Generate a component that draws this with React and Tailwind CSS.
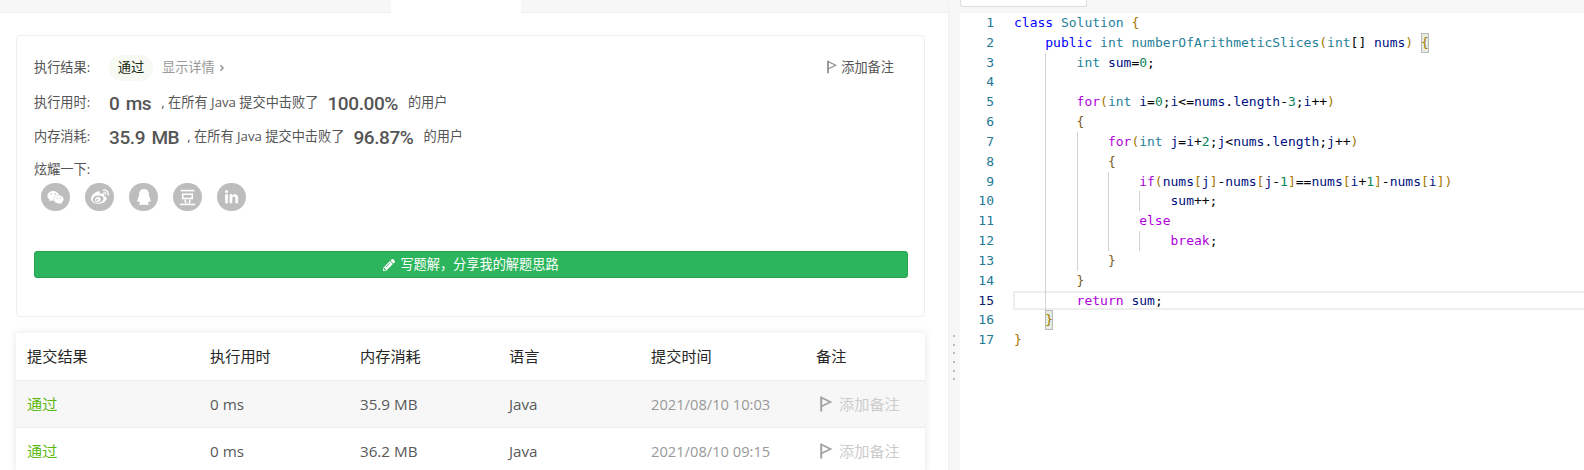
import { FaWeixin, FaWeibo, FaQq, FaLinkedinIn, FaPencilAlt, FaAngleRight } from "react-icons/fa";

const UI_FONT = "font-['Open_Sans','Noto_Sans_CJK_SC',sans-serif]";

const C = {
  kw: "text-[#0000ff]",
  type: "text-[#267f99]",
  ctl: "text-[#af00db]",
  v: "text-[#001080]",
  n: "text-[#098658]",
  b: "text-[#a57800]",
  p: "text-[#000000]",
  m: "text-[#795e26]",
};

const LINES = [
  { indent: 0, guides: [], t: [["class", "kw"], [" "], ["Solution", "type"], [" "], ["{", "b"]] },
  { indent: 1, guides: [], t: [["public", "kw"], [" "], ["int", "type"], [" "], ["numberOfArithmeticSlices", "type"], ["(", "b"], ["int", "type"], ["[] "], ["nums", "v"], [")", "b"], [" "], ["{", "match"]] },
  { indent: 2, guides: [1], t: [["int", "type"], [" "], ["sum", "v"], ["="], ["0", "n"], [";"]] },
  { indent: 2, guides: [1], t: [] },
  { indent: 2, guides: [1], t: [["for", "ctl"], ["(", "b"], ["int", "type"], [" "], ["i", "v"], ["="], ["0", "n"], [";"], ["i", "v"], ["<="], ["nums", "v"], ["."], ["length", "v"], ["-"], ["3", "n"], [";"], ["i", "v"], ["++"], [")", "b"]] },
  { indent: 2, guides: [1], t: [["{", "m"]] },
  { indent: 3, guides: [1, 2], t: [["for", "ctl"], ["(", "b"], ["int", "type"], [" "], ["j", "v"], ["="], ["i", "v"], ["+"], ["2", "n"], [";"], ["j", "v"], ["<"], ["nums", "v"], ["."], ["length", "v"], [";"], ["j", "v"], ["++"], [")", "b"]] },
  { indent: 3, guides: [1, 2], t: [["{", "m"]] },
  { indent: 4, guides: [1, 2, 3], t: [["if", "ctl"], ["(", "b"], ["nums", "v"], ["[", "b"], ["j", "v"], ["]", "b"], ["-"], ["nums", "v"], ["[", "b"], ["j", "v"], ["-"], ["1", "n"], ["]", "b"], ["=="], ["nums", "v"], ["[", "b"], ["i", "v"], ["+"], ["1", "n"], ["]", "b"], ["-"], ["nums", "v"], ["[", "b"], ["i", "v"], ["]", "b"], [")", "b"]] },
  { indent: 5, guides: [1, 2, 3, 4], t: [["sum", "v"], ["++;"]] },
  { indent: 4, guides: [1, 2, 3], t: [["else", "ctl"]] },
  { indent: 5, guides: [1, 2, 3, 4], t: [["break", "ctl"], [";"]] },
  { indent: 3, guides: [1, 2], t: [["}", "m"]] },
  { indent: 2, guides: [1], t: [["}", "m"]] },
  { indent: 2, guides: [1], current: true, t: [["return", "ctl"], [" "], ["sum", "v"], [";"]] },
  { indent: 1, guides: [], t: [["}", "match"]] },
  { indent: 0, guides: [], t: [["}", "b"]] },
];

const RECORDS = [
  { mem: "35.9 MB", time: "2021/08/10 10:03", bg: "bg-[#f7f7f7]" },
  { mem: "36.2 MB", time: "2021/08/10 09:15", bg: "bg-white" },
];

const COLS = "grid grid-cols-[183px_150px_149px_142px_162px_123px] items-center";

function Flag({ className, weight = 1.3 }) {
  return (
    <svg viewBox="0 0 12 16" className={className} fill="none" stroke="currentColor">
      <path d="M1.2 0.5V15.5" strokeWidth="2" />
      <path d="M1.2 1.5L10.5 6L1.2 10.5" strokeWidth={weight} />
    </svg>
  );
}

function Douban() {
  return (
    <svg viewBox="0 0 16 16" className="w-[17px] h-[17px]" fill="none" stroke="white" strokeWidth="1.5">
      <path d="M1.5 1.5H14.5" />
      <path d="M3.5 5H12.5V9H3.5Z" />
      <path d="M5.5 10L6.5 13.5" />
      <path d="M10.5 10L9.5 13.5" />
      <path d="M1 14.5H15" />
    </svg>
  );
}

function Social({ children }) {
  return <div className="w-[29px] h-[28px] rounded-full bg-[#bdbdbd] flex items-center justify-center text-white">{children}</div>;
}

function Big({ children, className = "" }) {
  return <span className={`font-['Roboto',sans-serif] font-medium text-[19px] leading-none tracking-[-0.4px] [word-spacing:2px] text-[#555] ${className}`}>{children}</span>;
}

function StatRow({ label, value, gap, percent, percentGap, userGap, className }) {
  return (
    <div className={`flex items-center h-[24px] text-[13.2px] text-[#555] ${className}`}>
      <span className="w-[75px]">{label}</span>
      <Big>{value}</Big>
      <span className={gap}>, 在所有 Java 提交中击败了</span>
      <Big className={percentGap}>{percent}</Big>
      <span className={userGap}>的用户</span>
    </div>
  );
}

function ResultCard() {
  return (
    <div className="ml-4 mt-[22px] w-[909px] h-[282px] shrink-0 border border-[#eeeeee] rounded-[4px] pl-[17px] pr-[16px] pt-[18px]">
      <div className="flex items-center h-[27px] text-[13.2px]">
        <span className="w-[75px] text-[#555]">执行结果:</span>
        <span className="w-[44px] h-[26px] rounded-full bg-[#f7faf3] flex items-center justify-center text-[#1a2a10]">通过</span>
        <span className="ml-[9px] text-[#999]">显示详情</span>
        <FaAngleRight className="ml-[2px] w-[10px] h-[10px] text-[#999]" />
        <div className="ml-auto mr-[14px] flex items-center gap-[4px] text-[#555]">
          <Flag className="w-[10px] h-[14px] text-[#8a8a8a]" />
          <span>添加备注</span>
        </div>
      </div>
      <StatRow className="mt-[10px]" label="执行用时:" value="0 ms" gap="ml-[10px]" percent="100.00%" percentGap="ml-[9px]" userGap="ml-[10px]" />
      <StatRow className="mt-[10px]" label="内存消耗:" value="35.9 MB" gap="ml-[8px]" percent="96.87%" percentGap="ml-[9px]" userGap="ml-[10px]" />
      <div className="mt-[11px] h-[20px] flex items-center text-[13.2px] text-[#555]">炫耀一下:</div>
      <div className="mt-[3px] ml-[7px] flex gap-[15px]">
        <Social><FaWeixin className="w-[17px] h-[17px]" /></Social>
        <Social><FaWeibo className="w-[18px] h-[18px]" /></Social>
        <Social><FaQq className="w-[16px] h-[16px]" /></Social>
        <Social><Douban /></Social>
        <Social><FaLinkedinIn className="w-[15px] h-[15px]" /></Social>
      </div>
      <div className="mt-[40px] h-[27px] rounded-[3px] bg-[#2db55d] border border-[#27a050] flex items-center justify-center gap-[5px] text-white text-[13.2px]">
        <FaPencilAlt className="w-[12px] h-[12px]" />
        <span>写题解，分享我的解题思路</span>
      </div>
    </div>
  );
}

function RecordsTable() {
  return (
    <div className="ml-4 mt-[16px] w-[909px] shrink-0 bg-white shadow-[0_0_8px_rgba(0,0,0,0.1)] text-[15.2px]">
      <div className={`${COLS} h-[47px] text-[#262626]`}>
        {["提交结果", "执行用时", "内存消耗", "语言", "提交时间"].map((h) => (
          <div key={h} className="pl-[11px]">{h}</div>
        ))}
        <div className="pl-[14px]">备注</div>
      </div>
      {RECORDS.map((r) => (
        <div key={r.time} className={`${COLS} h-[47px] border-t border-[#eeeeee] ${r.bg}`}>
          <div className="pl-[11px] text-[#5cb811]">通过</div>
          <div className="pl-[11px] text-[#595959]">0 ms</div>
          <div className="pl-[11px] text-[#595959]">{r.mem}</div>
          <div className="pl-[11px] text-[#595959]">Java</div>
          <div className="pl-[11px] text-[#999] text-[14.7px] whitespace-nowrap">{r.time}</div>
          <div className="pl-[18px] flex items-center gap-[7px] text-[#cccccc]">
            <Flag className="w-[12px] h-[16px] text-[#a3a3a3]" weight={1.9} />
            <span>添加备注</span>
          </div>
        </div>
      ))}
    </div>
  );
}

function Token({ text, kind }) {
  if (kind === "match") {
    return <span className="inline-block h-[19.84px] bg-[#e6eee2] outline outline-1 -outline-offset-1 outline-[#b9b9b9] text-[#a57800]">{text}</span>;
  }
  return <span className={C[kind] || C.p}>{text}</span>;
}

function CodeLine({ line, number }) {
  const levels = Array.from({ length: line.indent }, (_, i) => i);
  return (
    <div className="flex h-[19.84px] leading-[19.84px]">
      <div className={`w-[34px] shrink-0 text-right ${line.current ? "text-[#0b216f]" : "text-[#237893]"}`}>{number}</div>
      <div className="relative flex flex-1 ml-[20px] whitespace-pre">
        {line.current && <div className="absolute inset-0 -left-px border-2 border-r-0 border-[#eeeeee]" />}
        {levels.map((l) => (
          <span key={l} className={`relative w-[4ch] shrink-0 ${line.guides.includes(l) ? "border-l border-[#d3d3d3]" : ""}`} />
        ))}
        <span className="relative">
          {line.t.map(([text, kind], i) => (
            <Token key={i} text={text} kind={kind} />
          ))}
        </span>
      </div>
    </div>
  );
}

function Editor() {
  return (
    <div className="flex-1 flex flex-col bg-[#f7f7f7]">
      <div className="h-[13px] shrink-0">
        <div className="w-[127px] h-[7px] bg-white border border-t-0 border-[#dddddd] rounded-b-[3px]" />
      </div>
      <div className="flex-1 bg-white font-['DejaVu_Sans_Mono',monospace] text-[13px]">
        {LINES.map((line, i) => (
          <CodeLine key={i} line={line} number={i + 1} />
        ))}
      </div>
    </div>
  );
}

export default function App() {
  return (
    <div className={`w-[1584px] h-[470px] overflow-hidden flex bg-white ${UI_FONT}`}>
      <div className="w-[948px] shrink-0 flex flex-col">
        <div className="h-[13px] shrink-0 flex">
          <div className="w-[391px] bg-[#f7f7f7] border-b border-[#eeeeee]" />
          <div className="w-[130px] bg-white" />
          <div className="flex-1 bg-[#f7f7f7] border-b border-[#eeeeee]" />
        </div>
        <ResultCard />
        <RecordsTable />
      </div>
      <div className="w-[12px] shrink-0 bg-[#f7f7f7] border-l border-[#f0f0f0] pt-[335px] pl-[4px] flex flex-col gap-[6.7px]">
        {[0, 1, 2, 3, 4, 5].map((d) => (
          <div key={d} className="w-[2px] h-[2px] bg-[#bbbbbb]" />
        ))}
      </div>
      <Editor />
    </div>
  );
}
